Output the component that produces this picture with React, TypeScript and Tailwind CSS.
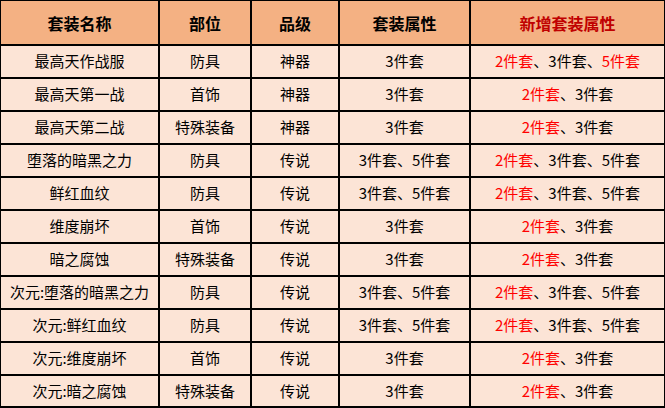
import React from 'react';

type Row = {
    name: string;
    slot: string;
    grade: string;
    attrs: string;
    extra: string[]; // first item is red, rest black unless marked
    redLast?: boolean;
};

const rows: Row[] = [
    { name: '最高天作战服', slot: '防具', grade: '神器', attrs: '3件套', extra: ['2件套', '3件套', '5件套'], redLast: true },
    { name: '最高天第一战', slot: '首饰', grade: '神器', attrs: '3件套', extra: ['2件套', '3件套'] },
    { name: '最高天第二战', slot: '特殊装备', grade: '神器', attrs: '3件套', extra: ['2件套', '3件套'] },
    { name: '堕落的暗黑之力', slot: '防具', grade: '传说', attrs: '3件套、5件套', extra: ['2件套', '3件套', '5件套'] },
    { name: '鲜红血纹', slot: '防具', grade: '传说', attrs: '3件套、5件套', extra: ['2件套', '3件套', '5件套'] },
    { name: '维度崩坏', slot: '首饰', grade: '传说', attrs: '3件套', extra: ['2件套', '3件套'] },
    { name: '暗之腐蚀', slot: '特殊装备', grade: '传说', attrs: '3件套', extra: ['2件套', '3件套'] },
    { name: '次元:堕落的暗黑之力', slot: '防具', grade: '传说', attrs: '3件套、5件套', extra: ['2件套', '3件套', '5件套'] },
    { name: '次元:鲜红血纹', slot: '防具', grade: '传说', attrs: '3件套、5件套', extra: ['2件套', '3件套', '5件套'] },
    { name: '次元:维度崩坏', slot: '首饰', grade: '传说', attrs: '3件套', extra: ['2件套', '3件套'] },
    { name: '次元:暗之腐蚀', slot: '特殊装备', grade: '传说', attrs: '3件套', extra: ['2件套', '3件套'] },
];

const font = { fontFamily: '"Microsoft YaHei", "Noto Sans CJK SC", sans-serif' };

export default function App() {
    return (
        <div className="w-[665px] h-[408px] overflow-hidden bg-white" style={font}>
            <table className="table-fixed border-separate border-spacing-0 w-[665px] border-l border-t border-black text-center">
                <colgroup>
                    <col className="w-[159px]" />
                    <col className="w-[92px]" />
                    <col className="w-[88px]" />
                    <col className="w-[131px]" />
                    <col className="w-[194px]" />
                </colgroup>
                <thead>
                    <tr className="bg-[#f4b183] text-[16px] font-bold text-black">
                        <th className="h-[45px] border-r-2 border-b-2 border-black p-0">套装名称</th>
                        <th className="h-[45px] border-r-2 border-b-2 border-black p-0">部位</th>
                        <th className="h-[45px] border-r-2 border-b-2 border-black p-0">品级</th>
                        <th className="h-[45px] border-r-2 border-b-2 border-black p-0">套装属性</th>
                        <th className="h-[45px] border-r border-b-2 border-black p-0 text-[#c00000]">新增套装属性</th>
                    </tr>
                </thead>
                <tbody>
                    {rows.map((r, i) => {
                        const last = i === rows.length - 1;
                        const b = last ? 'h-[32px] border-b-2' : 'h-[33px] border-b-2';
                        return (
                            <tr key={i} className="bg-[#fce4d6] text-[15px] text-black">
                                <td className={`${b} border-r-2 border-black p-0 whitespace-nowrap`}>{r.name}</td>
                                <td className={`${b} border-r-2 border-black p-0`}>{r.slot}</td>
                                <td className={`${b} border-r-2 border-black p-0`}>{r.grade}</td>
                                <td className={`${b} border-r-2 border-black p-0`}>{r.attrs}</td>
                                <td className={`${b} border-r border-black p-0 whitespace-nowrap`}>
                                    {r.extra.map((e, j) => {
                                        const red = j === 0 || (r.redLast && j === r.extra.length - 1);
                                        return (
                                            <span key={j}>
                                                {j > 0 && '、'}
                                                <span className={red ? 'text-[#ff0000]' : ''}>{e}</span>
                                            </span>
                                        );
                                    })}
                                </td>
                            </tr>
                        );
                    })}
                </tbody>
            </table>
        </div>
    );
}
